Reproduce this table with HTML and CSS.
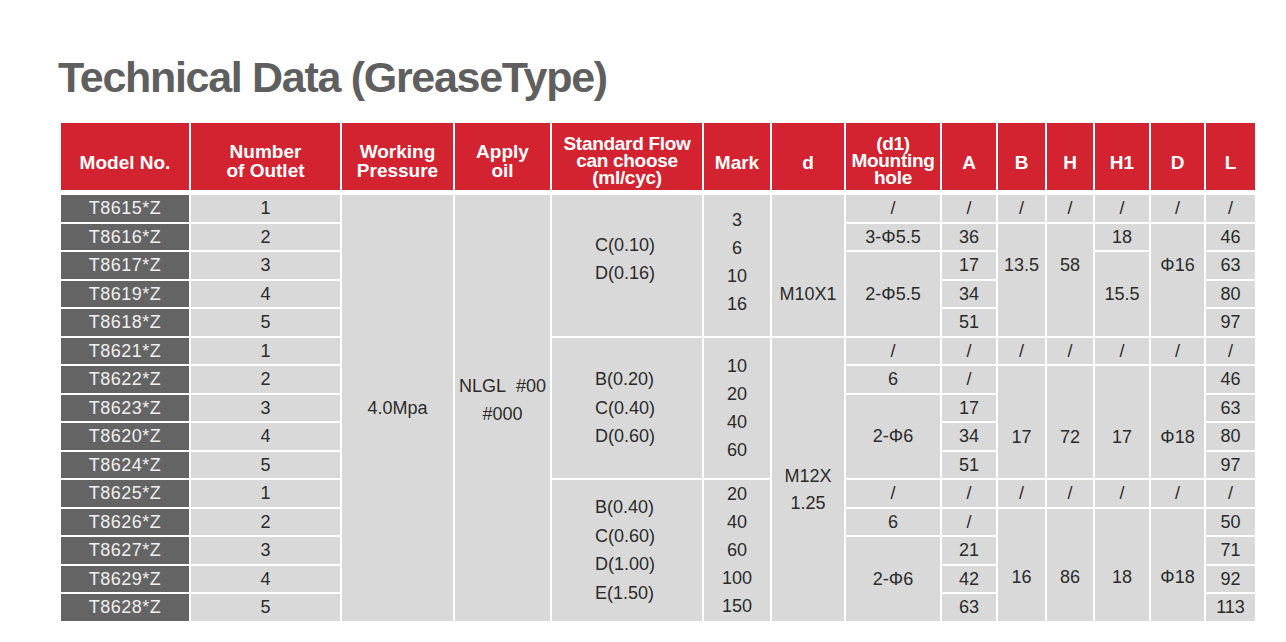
FILE: index.html
```html
<!DOCTYPE html>
<html lang="en">
<head>
<meta charset="utf-8">
<title>Technical Data (GreaseType)</title>
<link rel="stylesheet" href="styles.css">
</head>
<body>
<main class="page">
  <h1 class="title">Technical Data (GreaseType)</h1>
  <table class="spec">
    <colgroup>
      <col class="c-model"><col class="c-num"><col class="c-wp"><col class="c-oil"><col class="c-flow">
      <col class="c-mark"><col class="c-d"><col class="c-hole"><col class="c-a"><col class="c-b">
      <col class="c-h"><col class="c-h1"><col class="c-dd"><col class="c-l">
    </colgroup>
    <thead>
      <tr class="head-row">
        <th>Model No.</th>
        <th class="two">Number<br>of Outlet</th>
        <th class="two">Working<br>Pressure</th>
        <th class="two">Apply<br>oil</th>
        <th class="three">Standard Flow<br>can choose<br>(ml/cyc)</th>
        <th>Mark</th>
        <th>d</th>
        <th class="three">(d1)<br>Mounting<br>hole</th>
        <th>A</th><th>B</th><th>H</th><th>H1</th><th>D</th><th>L</th>
      </tr>
    </thead>
    <tbody>
      <tr>
        <td class="model">T8615*Z</td><td>1</td>
        <td rowspan="15">4.0Mpa</td>
        <td rowspan="15" class="oil">NLGL&nbsp; #00<br>#000</td>
        <td rowspan="5" class="flow lift">C(0.10)<br>D(0.16)</td>
        <td rowspan="5" class="stack lift-s">3<br>6<br>10<br>16</td>
        <td rowspan="5" class="d1">M10X1</td>
        <td>/</td><td>/</td><td>/</td><td>/</td><td>/</td><td>/</td><td>/</td>
      </tr>
      <tr>
        <td class="model">T8616*Z</td><td>2</td>
        <td>3-Φ5.5</td><td>36</td>
        <td rowspan="4" class="up">13.5</td>
        <td rowspan="4" class="up">58</td>
        <td>18</td>
        <td rowspan="4" class="up">Φ16</td>
        <td>46</td>
      </tr>
      <tr>
        <td class="model">T8617*Z</td><td>3</td>
        <td rowspan="3">2-Φ5.5</td><td>17</td>
        <td rowspan="3">15.5</td>
        <td>63</td>
      </tr>
      <tr><td class="model">T8619*Z</td><td>4</td><td>34</td><td>80</td></tr>
      <tr><td class="model">T8618*Z</td><td>5</td><td>51</td><td>97</td></tr>

      <tr>
        <td class="model">T8621*Z</td><td>1</td>
        <td rowspan="5" class="flow">B(0.20)<br>C(0.40)<br>D(0.60)</td>
        <td rowspan="5" class="stack">10<br>20<br>40<br>60</td>
        <td rowspan="10" class="d2">M12X<br>1.25</td>
        <td>/</td><td>/</td><td>/</td><td>/</td><td>/</td><td>/</td><td>/</td>
      </tr>
      <tr>
        <td class="model">T8622*Z</td><td>2</td>
        <td>6</td><td>/</td>
        <td rowspan="4" class="down">17</td>
        <td rowspan="4" class="down">72</td>
        <td rowspan="4" class="down">17</td>
        <td rowspan="4" class="down">Φ18</td>
        <td>46</td>
      </tr>
      <tr>
        <td class="model">T8623*Z</td><td>3</td>
        <td rowspan="3">2-Φ6</td><td>17</td><td>63</td>
      </tr>
      <tr><td class="model">T8620*Z</td><td>4</td><td>34</td><td>80</td></tr>
      <tr><td class="model">T8624*Z</td><td>5</td><td>51</td><td>97</td></tr>

      <tr>
        <td class="model">T8625*Z</td><td>1</td>
        <td rowspan="5" class="flow">B(0.40)<br>C(0.60)<br>D(1.00)<br>E(1.50)</td>
        <td rowspan="5" class="stack">20<br>40<br>60<br>100<br>150</td>
        <td>/</td><td>/</td><td>/</td><td>/</td><td>/</td><td>/</td><td>/</td>
      </tr>
      <tr>
        <td class="model">T8626*Z</td><td>2</td>
        <td>6</td><td>/</td>
        <td rowspan="4" class="down-s">16</td>
        <td rowspan="4" class="down-s">86</td>
        <td rowspan="4" class="down-s">18</td>
        <td rowspan="4" class="down-s">Φ18</td>
        <td>50</td>
      </tr>
      <tr>
        <td class="model">T8627*Z</td><td>3</td>
        <td rowspan="3">2-Φ6</td><td>21</td><td>71</td>
      </tr>
      <tr><td class="model">T8629*Z</td><td>4</td><td>42</td><td>92</td></tr>
      <tr><td class="model">T8628*Z</td><td>5</td><td>63</td><td>113</td></tr>
    </tbody>
  </table>
</main>
</body>
</html>
```

FILE: styles.css
```css
html, body {
  margin: 0;
  padding: 0;
  background: #ffffff;
}

.page {
  padding: 56px 0 0 59px;
  font-family: "Liberation Sans", Arial, sans-serif;
}

.title {
  margin: 0 0 22px -1px;
  font-size: 43px;
  line-height: 43px;
  font-weight: 700;
  letter-spacing: -1.3px;
  color: #5f5f5f;
}

.spec {
  table-layout: fixed;
  width: 1198px;
  border-collapse: separate;
  border-spacing: 2px;
}

.c-model { width: 128px; }
.c-num { width: 149px; }
.c-wp { width: 111px; }
.c-oil { width: 95px; }
.c-flow { width: 150px; }
.c-mark { width: 66px; }
.c-d { width: 72px; }
.c-hole { width: 94px; }
.c-a { width: 54px; }
.c-b { width: 47px; }
.c-h { width: 46px; }
.c-h1 { width: 54px; }
.c-dd { width: 53px; }
.c-l { width: 49px; }

.head-row {
  height: 70px;
}

.spec th {
  padding: 11px 0 0;
  background: #d42330;
  color: #ffffff;
  font-size: 19px;
  font-weight: 700;
  line-height: 19px;
  text-align: center;
  vertical-align: middle;
  border-bottom: 3px solid #ffffff;
  white-space: nowrap;
}

.spec th.two {
  padding-top: 8px;
  line-height: 19px;
}

.spec th.three {
  padding-top: 8px;
  line-height: 17px;
  letter-spacing: -0.3px;
}

.spec tbody tr {
  height: 26.5px;
}

.spec td {
  padding: 0;
  background: #d9d9d9;
  color: #2b2b2b;
  font-size: 18px;
  line-height: 26px;
  text-align: center;
  vertical-align: middle;
  white-space: nowrap;
}

.spec td.model {
  background: #646464;
  color: #f0f0f0;
  letter-spacing: 0.5px;
}

.spec td.oil {
  line-height: 28px;
  padding-bottom: 16px;
}

.spec td.flow {
  text-align: left;
  padding-left: 43px;
  line-height: 28.5px;
}

.spec td.stack {
  line-height: 28px;
}

.spec td.lift {
  padding-bottom: 12px;
}

.spec td.lift-s {
  padding-bottom: 6px;
}

.spec td.d1 {
  padding-top: 57px;
}

.spec td.d2 {
  line-height: 27px;
  padding-top: 22px;
}

.spec td.up {
  padding-bottom: 29px;
}

.spec td.down {
  padding-top: 29px;
}

.spec td.down-s {
  padding-top: 24px;
}
```
